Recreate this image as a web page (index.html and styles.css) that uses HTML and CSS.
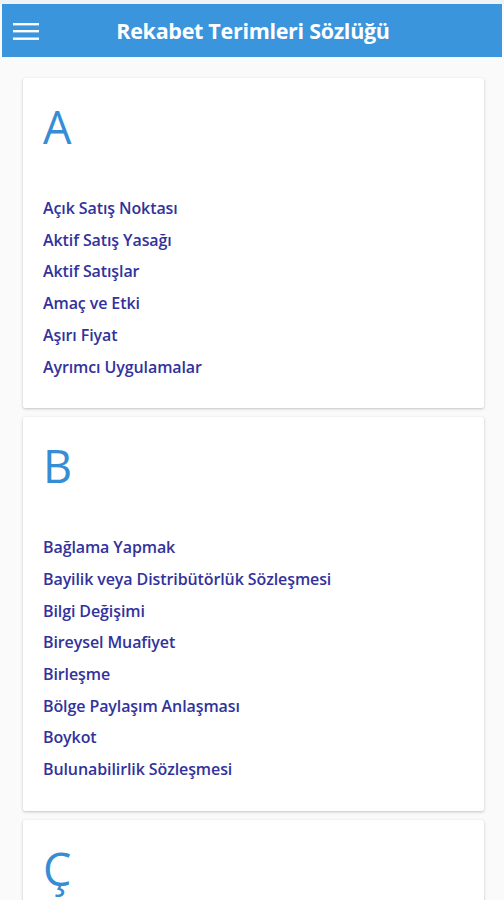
FILE: index.html
```html
<!DOCTYPE html>
<html lang="tr">
<head>
<meta charset="utf-8">
<title>Rekabet Terimleri Sözlüğü</title>
<link rel="stylesheet" href="styles.css">
</head>
<body>
<div class="topstrip"></div>
<header class="appbar">
  <button class="menu" aria-label="Menü">
    <svg width="26" height="20" viewBox="0 0 26 20"><rect x="0" y="2" width="26" height="2.4" fill="#fff"/><rect x="0" y="9" width="26" height="2.4" fill="#fff"/><rect x="0" y="16.5" width="26" height="2.4" fill="#fff"/></svg>
  </button>
  <h1 class="title">Rekabet Terimleri Sözlüğü</h1>
</header>
<main class="content">
  <section class="card">
    <h2 class="letter">A</h2>
    <ul class="terms">
      <li><a href="#">Açık Satış Noktası</a></li>
      <li><a href="#">Aktif Satış Yasağı</a></li>
      <li><a href="#">Aktif Satışlar</a></li>
      <li><a href="#">Amaç ve Etki</a></li>
      <li><a href="#">Aşırı Fiyat</a></li>
      <li><a href="#">Ayrımcı Uygulamalar</a></li>
    </ul>
  </section>
  <section class="card">
    <h2 class="letter">B</h2>
    <ul class="terms">
      <li><a href="#">Bağlama Yapmak</a></li>
      <li><a href="#">Bayilik veya Distribütörlük Sözleşmesi</a></li>
      <li><a href="#">Bilgi Değişimi</a></li>
      <li><a href="#">Bireysel Muafiyet</a></li>
      <li><a href="#">Birleşme</a></li>
      <li><a href="#">Bölge Paylaşım Anlaşması</a></li>
      <li><a href="#">Boykot</a></li>
      <li><a href="#">Bulunabilirlik Sözleşmesi</a></li>
    </ul>
  </section>
  <section class="card card-last">
    <h2 class="letter">Ç</h2>
  </section>
</main>
</body>
</html>
```
FILE: styles.css
```css
* { box-sizing: border-box; }
html, body { margin: 0; padding: 0; }
body {
  background: #fafafa;
  font-family: "Open Sans", "Noto Sans", sans-serif;
  height: 900px;
  overflow: hidden;
}
.topstrip { height: 4px; background: #eef3f7; }
.appbar {
  height: 53px;
  margin: 0 2px;
  background: #3a95dc;
  display: flex;
  align-items: center;
  position: relative;
}
.menu {
  background: none;
  border: 0;
  padding: 0;
  margin-left: 11px;
  width: 26px;
  height: 20px;
  display: flex;
}
.title {
  flex: 1;
  margin: 0;
  padding-right: 35px;
  text-align: center;
  color: #fff;
  font-size: 21.5px;
  font-weight: 700;
  letter-spacing: -0.3px;
}
.content {
  padding: 21px 20px 0 23px;
  display: flex;
  flex-direction: column;
  gap: 9px;
}
.card {
  background: #fff;
  border-radius: 2px;
  box-shadow: 0 1px 3px rgba(0,0,0,0.22), 0 0 1px rgba(0,0,0,0.06);
  padding: 18px 20px 25px 20px;
}
.card-last { height: 120px; }
.letter {
  margin: 0;
  font-size: 45px;
  font-weight: 400;
  color: #378dd4;
  line-height: 62px;
  height: 62px;
}
.terms {
  list-style: none;
  margin: 35px 0 0 0;
  padding: 0;
}
.terms li {
  line-height: 31.7px;
  font-size: 16px;
}
.terms a {
  color: #32329c;
  font-weight: 600;
  text-decoration: none;
  letter-spacing: -0.1px;
}
```
